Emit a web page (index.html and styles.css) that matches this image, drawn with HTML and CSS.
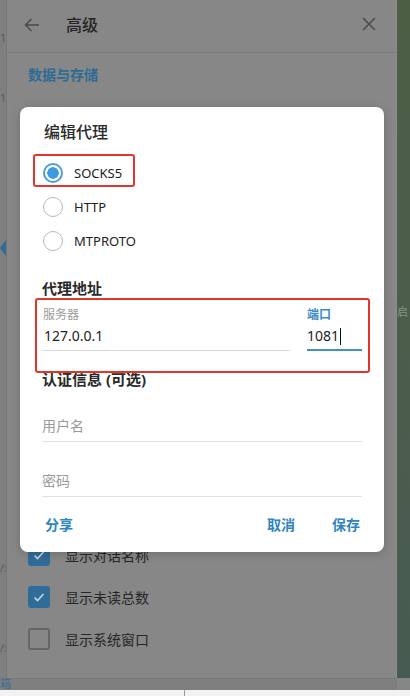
FILE: index.html
```html
<!DOCTYPE html>
<html lang="zh">
<head>
<meta charset="utf-8">
<title>编辑代理</title>
<link rel="stylesheet" href="styles.css">
</head>
<body>
<div class="screen">
  <div class="main">
    <div class="left-strip">
      <span class="frag f1">1</span>
      <span class="frag f2">1</span>
      <span class="tri"></span>
      <span class="frag f3">/:</span>
      <span class="frag f4">/:</span>
    </div>
    <div class="panel">
      <div class="header">
        <svg class="back" width="18" height="18" viewBox="0 0 18 18"><path d="M16 9H2.5M8.5 3L2.5 9l6 6" fill="none" stroke="#4a4a4a" stroke-width="1.5"/></svg>
        <div class="htitle">高级</div>
        <svg class="close" width="14" height="14" viewBox="0 0 14 14"><path d="M1 1l12 12M13 1L1 13" fill="none" stroke="#4a4a4a" stroke-width="1.5"/></svg>
      </div>
      <div class="section-title">数据与存储</div>
      <div class="spacer"></div>
      <div class="checklist">
        <div class="check-row"><span class="cb on"><svg width="14" height="14" viewBox="0 0 14 14"><path d="M2.5 7.5l3 3 6-6.5" fill="none" stroke="#c9d6df" stroke-width="1.6"/></svg></span>显示对话名称</div>
        <div class="check-row"><span class="cb on"><svg width="14" height="14" viewBox="0 0 14 14"><path d="M2.5 7.5l3 3 6-6.5" fill="none" stroke="#c9d6df" stroke-width="1.6"/></svg></span>显示未读总数</div>
        <div class="check-row"><span class="cb"></span>显示系统窗口</div>
      </div>
    </div>
    <div class="green-strip"><span class="gfrag">启</span></div>
  </div>
  <div class="bottom-band"><span class="bfrag">箱</span></div>
  <div class="bottom-white"><span class="bdiv"></span></div>

  <div class="dialog">
    <div class="dlg-title">编辑代理</div>
    <div class="radios">
      <div class="radio on"><span class="ring"></span>SOCKS5</div>
      <div class="radio"><span class="ring"></span>HTTP</div>
      <div class="radio"><span class="ring"></span>MTPROTO</div>
    </div>
    <div class="sec sec-addr">代理地址</div>
    <div class="fields">
      <div class="field server">
        <div class="flabel">服务器</div>
        <div class="fvalue">127.0.0.1</div>
      </div>
      <div class="field port">
        <div class="flabel">端口</div>
        <div class="fvalue">1081<span class="caret"></span></div>
      </div>
    </div>
    <div class="sec sec-auth">认证信息 (可选)</div>
    <div class="input first">用户名</div>
    <div class="input">密码</div>
    <div class="actions">
      <span class="btn share">分享</span>
      <span class="grow"></span>
      <span class="btn">取消</span>
      <span class="btn save">保存</span>
    </div>
    <div class="mark mark1"></div>
    <div class="mark mark2"></div>
  </div>
</div>
</body>
</html>
```

FILE: styles.css
```css
* { box-sizing: border-box; }
html, body { margin: 0; padding: 0; }
body {
  font-family: "Noto Sans", "Noto Sans CJK SC", sans-serif;
  background: #868686;
}
.screen {
  position: relative;
  width: 410px;
  height: 696px;
  overflow: hidden;
  display: flex;
  flex-direction: column;
  background: #868686;
}
.main {
  display: flex;
  height: 678px;
}
.left-strip {
  position: relative;
  width: 7px;
  background: #7f7f7f;
  border-right: 1px solid #777;
  overflow: hidden;
}
.frag { position: absolute; left: 0; font-size: 11px; color: #5b5b5b; }
.f1 { top: 30px; }
.f2 { top: 90px; }
.f3 { top: 560px; }
.f4 { top: 640px; }
.tri {
  position: absolute; left: 0; top: 240px;
  width: 0; height: 0;
  border-top: 8px solid transparent;
  border-bottom: 8px solid transparent;
  border-right: 6px solid #2d6c95;
}
.panel {
  flex: 1;
  display: flex;
  flex-direction: column;
  background: #878787;
  border-right: 1px solid #8d8d8d;
}
.header {
  height: 53px;
  display: flex;
  align-items: center;
  padding: 0 0 4px 16px;
  border-bottom: 1px solid #7c7c7c;
}
.back { margin-top: 2px; }
.htitle {
  margin-left: 25px;
  font-size: 16px;
  font-weight: 500;
  color: #242424;
}
.close { margin-left: auto; margin-right: 20px; }
.section-title {
  margin-top: 12px;
  padding-left: 21px;
  font-size: 14px;
  font-weight: 700;
  line-height: 20px;
  color: #2d6b94;
}
.spacer { flex: 1; }
.checklist {
  padding-left: 21px;
  margin-bottom: 18px;
}
.check-row {
  height: 42px;
  display: flex;
  align-items: center;
  font-size: 14px;
  color: #262626;
}
.cb {
  width: 22px;
  height: 22px;
  margin-right: 15px;
  border: 2px solid #666;
  border-radius: 3px;
  display: flex;
  align-items: center;
  justify-content: center;
}
.cb.on {
  background: #2f6d98;
  border-color: #2f6d98;
}
.green-strip {
  position: relative;
  width: 13px;
  background: linear-gradient(#4c5f45, #4b5e4c 50%, #485b52);
  overflow: hidden;
}
.gfrag { position: absolute; left: 0; top: 303px; font-size: 11px; color: #8a9288; }
.bottom-band {
  position: relative;
  height: 12px;
  background: #7f7f7f;
  border-top: 1px solid #767676;
  margin-right: 13px;
}
.bfrag { position: absolute; left: 0; top: -4px; font-size: 11px; color: #3b6f95; }
.bottom-white {
  position: relative;
  height: 6px;
  background: #f2f2f2;
}
.bdiv {
  position: absolute;
  left: 184px; top: 0;
  width: 1px; height: 6px;
  background: #9a9a9a;
}

/* dialog */
.dialog {
  position: absolute;
  left: 20px;
  top: 107px;
  width: 364px;
  height: 445px;
  padding: 0 22px;
  background: #ffffff;
  border-radius: 8px;
  box-shadow: 0 2px 10px rgba(0,0,0,0.18);
}
.dlg-title {
  padding-top: 13px;
  padding-left: 2px;
  font-size: 16px;
  line-height: 24px;
  font-weight: 500;
  color: #2b2b2b;
}
.radios { margin-top: 12px; }
.radio {
  height: 34px;
  display: flex;
  align-items: center;
  font-size: 13px;
  color: #222;
}
.ring {
  width: 20px;
  height: 20px;
  margin-left: 1px;
  margin-right: 11px;
  border: 1.5px solid #b9b9b9;
  border-radius: 50%;
  flex: none;
}
.radio.on .ring {
  border: 2px solid #4b9fd8;
  background: radial-gradient(circle, #3f9be0 0 5.5px, #ffffff 6px);
}
.sec {
  font-size: 15px;
  line-height: 20px;
  font-weight: 700;
  color: #2a2a2a;
}
.sec-addr { margin-top: 20px; }
.sec-auth { margin-top: 18px; }
.fields {
  display: flex;
  gap: 17px;
  margin-top: 9px;
}
.field { display: flex; flex-direction: column; }
.server { width: 248px; border-bottom: 1px solid #dcdcdc; padding-bottom: 4px; }
.port { width: 55px; border-bottom: 2px solid #4691c4; padding-bottom: 3px; height: 44px; }
.flabel {
  font-size: 12px;
  line-height: 16px;
  color: #9b9b9b;
  padding-left: 1px;
}
.port .flabel { color: #3a8cc9; font-weight: 700; padding-left: 0; }
.fvalue {
  margin-top: 3px;
  font-size: 14px;
  line-height: 20px;
  color: #222;
  padding-left: 2px;
  display: flex;
  align-items: center;
}
.port .fvalue { padding-left: 0; }
.caret {
  display: inline-block;
  width: 1px;
  height: 17px;
  margin-left: 1px;
  background: #111;
}
.input {
  margin-top: 29px;
  padding-bottom: 5px;
  font-size: 14px;
  line-height: 20px;
  color: #9a9a9a;
  border-bottom: 1px solid #e2e2e2;
}
.input.first { margin-top: 27px; }
.actions {
  margin-top: 18px;
  display: flex;
  align-items: center;
  line-height: 20px;
}
.btn {
  font-size: 14px;
  font-weight: 700;
  color: #2f85bf;
}
.share { padding-left: 3px; }
.grow { flex: 1; }
.save { margin-left: 37px; margin-right: 2px; }
.mark {
  position: absolute;
  border: 2px solid #e0372c;
  border-radius: 3px;
}
.mark1 { left: 13px; top: 47px; width: 102px; height: 33px; }
.mark2 { left: 15px; top: 191px; width: 335px; height: 75px; }
```
